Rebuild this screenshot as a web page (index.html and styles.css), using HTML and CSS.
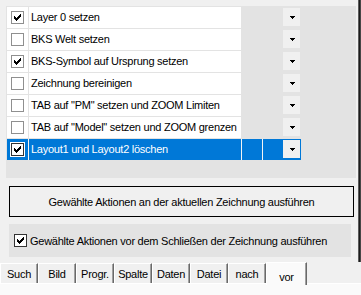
FILE: index.html
```html
<!DOCTYPE html>
<html>
  <head>
    <link rel="stylesheet" href="styles.css">
  </head>
  <body>
    <div id="frame">
      <div id="top">
        <div id="main">
          <div id="grid">
            <div class="row">
              <div class="cell chk"><span class="box on"><svg viewBox="0 0 7 7" width="7" height="7" shape-rendering="crispEdges"><polygon points="0,2 1,2 1,3 2,3 2,4 3,4 3,3 4,3 4,2 5,2 5,1 6,1 6,0 7,0 7,3 6,3 6,4 5,4 5,5 4,5 4,6 3,6 3,7 2,7 2,6 1,6 1,5 0,5"/></svg></span></div>
              <div class="cell name">Layer 0 setzen</div>
              <div class="cell extra"></div>
              <div class="cell opt"><span class="drop"><svg viewBox="0 0 5 3" width="5" height="3" shape-rendering="crispEdges"><path d="M0 0h5v1h-1v1h-1v1h-1v-1h-1v-1h-1z"/></svg></span></div>
            </div>
            <div class="row">
              <div class="cell chk"><span class="box"></span></div>
              <div class="cell name">BKS Welt setzen</div>
              <div class="cell extra"></div>
              <div class="cell opt"><span class="drop"><svg viewBox="0 0 5 3" width="5" height="3" shape-rendering="crispEdges"><path d="M0 0h5v1h-1v1h-1v1h-1v-1h-1v-1h-1z"/></svg></span></div>
            </div>
            <div class="row">
              <div class="cell chk"><span class="box on"><svg viewBox="0 0 7 7" width="7" height="7" shape-rendering="crispEdges"><polygon points="0,2 1,2 1,3 2,3 2,4 3,4 3,3 4,3 4,2 5,2 5,1 6,1 6,0 7,0 7,3 6,3 6,4 5,4 5,5 4,5 4,6 3,6 3,7 2,7 2,6 1,6 1,5 0,5"/></svg></span></div>
              <div class="cell name">BKS-Symbol auf Ursprung setzen</div>
              <div class="cell extra"></div>
              <div class="cell opt"><span class="drop"><svg viewBox="0 0 5 3" width="5" height="3" shape-rendering="crispEdges"><path d="M0 0h5v1h-1v1h-1v1h-1v-1h-1v-1h-1z"/></svg></span></div>
            </div>
            <div class="row">
              <div class="cell chk"><span class="box"></span></div>
              <div class="cell name">Zeichnung bereinigen</div>
              <div class="cell extra"></div>
              <div class="cell opt"><span class="drop"><svg viewBox="0 0 5 3" width="5" height="3" shape-rendering="crispEdges"><path d="M0 0h5v1h-1v1h-1v1h-1v-1h-1v-1h-1z"/></svg></span></div>
            </div>
            <div class="row">
              <div class="cell chk"><span class="box"></span></div>
              <div class="cell name">TAB auf "PM" setzen und ZOOM Limiten</div>
              <div class="cell extra"></div>
              <div class="cell opt"><span class="drop"><svg viewBox="0 0 5 3" width="5" height="3" shape-rendering="crispEdges"><path d="M0 0h5v1h-1v1h-1v1h-1v-1h-1v-1h-1z"/></svg></span></div>
            </div>
            <div class="row">
              <div class="cell chk"><span class="box"></span></div>
              <div class="cell name">TAB auf "Model" setzen und ZOOM grenzen</div>
              <div class="cell extra"></div>
              <div class="cell opt"><span class="drop"><svg viewBox="0 0 5 3" width="5" height="3" shape-rendering="crispEdges"><path d="M0 0h5v1h-1v1h-1v1h-1v-1h-1v-1h-1z"/></svg></span></div>
            </div>
            <div class="row sel">
              <div class="cell chk"><span class="box on"><svg viewBox="0 0 7 7" width="7" height="7" shape-rendering="crispEdges"><polygon points="0,2 1,2 1,3 2,3 2,4 3,4 3,3 4,3 4,2 5,2 5,1 6,1 6,0 7,0 7,3 6,3 6,4 5,4 5,5 4,5 4,6 3,6 3,7 2,7 2,6 1,6 1,5 0,5"/></svg></span></div>
              <div class="cell name">Layout1 und Layout2 löschen</div>
              <div class="cell extra"></div>
              <div class="cell opt"><span class="drop"><svg viewBox="0 0 5 3" width="5" height="3" shape-rendering="crispEdges"><path d="M0 0h5v1h-1v1h-1v1h-1v-1h-1v-1h-1z"/></svg></span></div>
            </div>
          </div>
          <button id="runButton">Gewählte Aktionen an der aktuellen Zeichnung ausführen</button>
          <div id="closeOption">
            <span class="box dark on"><svg viewBox="0 0 7 7" width="7" height="7" shape-rendering="crispEdges"><polygon points="0,2 1,2 1,3 2,3 2,4 3,4 3,3 4,3 4,2 5,2 5,1 6,1 6,0 7,0 7,3 6,3 6,4 5,4 5,5 4,5 4,6 3,6 3,7 2,7 2,6 1,6 1,5 0,5"/></svg></span>
            <span>Gewählte Aktionen vor dem Schließen der Zeichnung ausführen</span>
          </div>
        </div>
        <div id="edge"></div>
      </div>
      <div id="tabs">
        <div class="tablink">Such</div>
        <div class="tablink">Bild</div>
        <div class="tablink">Progr.</div>
        <div class="tablink">Spalte</div>
        <div class="tablink">Daten</div>
        <div class="tablink">Datei</div>
        <div class="tablink">nach</div>
        <div class="tablink active">vor</div>
      </div>
      <div id="page"></div>
    </div>
  </body>
</html>
```

FILE: styles.css
```css
body {
  margin: 0;
  background-color: #f0f0f0;
  font-family: 'Liberation Sans', Arial, sans-serif;
  font-size: 11px;
  letter-spacing: -0.25px;
  color: #000000;
}

#frame {
  width: 361px;
  height: 295px;
  overflow: hidden;
}

#top {
  display: flex;
  height: 262px;
}

#main {
  width: 358px;
  padding: 6px 0 0 6px;
  box-sizing: border-box;
}

#edge {
  width: 3px;
  background: linear-gradient(to right, #5c5c5c 0, #5c5c5c 1px, #1c1c1c 1px, #1c1c1c 2px, #474747 2px);
}

/* grid of actions */
#grid {
  width: 350px;
  height: 172px;
  background-color: #e3e3e3;
  padding: 1px;
  box-sizing: border-box;
  display: flex;
  flex-direction: column;
  gap: 1px;
}

.row {
  display: flex;
  gap: 1px;
  width: 294px;
  height: 21px;
}

.row.sel {
  background-color: #f4f4f4;
}

.cell {
  height: 21px;
}

.chk {
  width: 21px;
  background-color: #ffffff;
  display: flex;
  align-items: center;
  justify-content: center;
}

.name {
  width: 212px;
  background-color: #ffffff;
  padding-left: 2px;
  box-sizing: border-box;
  line-height: 21px;
  white-space: nowrap;
  overflow: hidden;
}

.extra {
  width: 20px;
}

.opt {
  width: 38px;
  display: flex;
}

.sel .cell {
  background-color: #0078d7;
  color: #ffffff;
}

.box {
  width: 13px;
  height: 13px;
  box-sizing: border-box;
  border: 1px solid #8f8f8f;
  background-color: #ffffff;
  display: block;
  padding: 2px;
}

.box svg {
  display: block;
  fill: #000000;
}

.sel .box {
  border-color: #333333;
  box-shadow: 0 0 0 1px #ffffff;
}

.box.dark {
  border-color: #333333;
  flex-shrink: 0;
}

.drop {
  width: 17px;
  height: 18px;
  margin: 1px 1px 0 auto;
  background-color: #f0f0f0;
  box-sizing: border-box;
  padding: 8px 0 0 7px;
}

.drop svg {
  display: block;
  fill: #000000;
}

/* run button and option */
#runButton {
  display: block;
  width: 345px;
  height: 31px;
  margin: 8px 0 0 3px;
  border: 1px solid #000000;
  background-color: #f0f0f0;
  font-family: 'Liberation Sans', Arial, sans-serif;
  font-size: 11px;
  letter-spacing: -0.25px;
  color: #000000;
  padding: 0;
}

#closeOption {
  display: flex;
  align-items: center;
  gap: 3px;
  width: 342px;
  height: 33px;
  margin: 7px 0 0 3px;
  padding-left: 5px;
  box-sizing: border-box;
  background-color: #e3e3e3;
  white-space: nowrap;
}

/* bottom tabs */
#tabs {
  display: flex;
  height: 22px;
  box-sizing: border-box;
  border-bottom: 1px solid #ffffff;
}

.tablink {
  width: 38px;
  height: 20px;
  margin-top: 1px;
  box-sizing: border-box;
  border-top: 1px solid #ffffff;
  border-left: 1px solid #ffffff;
  border-right: 1px solid #696969;
  box-shadow: inset -1px 0 #a0a0a0;
  text-align: center;
  padding-top: 4px;
  line-height: 13px;
}

.tablink.active {
  width: 41px;
  height: 23px;
  margin-top: 0;
  margin-bottom: -1px;
  padding-top: 8px;
  background-color: #fafafa;
}

#page {
  height: 12px;
  background-color: #fafafa;
}
```
